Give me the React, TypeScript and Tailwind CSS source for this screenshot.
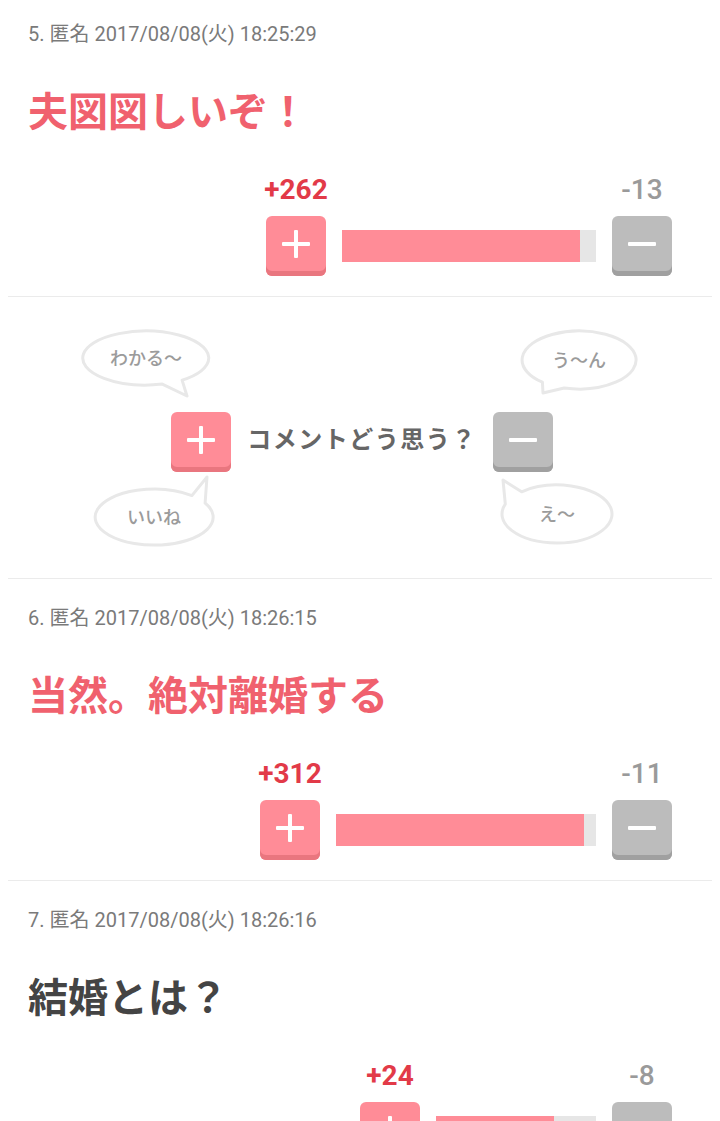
const entries = [
  { no: 5, date: "2017/08/08(火) 18:25:29", title: "夫図図しいぞ！", pink: true, plus: 262, minus: 13, barW: 254, fillW: 238, first: true },
  { no: 6, date: "2017/08/08(火) 18:26:15", title: "当然。絶対離婚する", pink: true, plus: 312, minus: 11, barW: 260, fillW: 248, first: false },
  { no: 7, date: "2017/08/08(火) 18:26:16", title: "結婚とは？", pink: false, plus: 24, minus: 8, barW: 160, fillW: 118, first: false },
];

const PlusButton = () => (
  <div className="w-[60px] h-[60px] rounded-[6px] bg-[#ff8c97] shadow-[inset_0_-5px_0_#e9767f] flex items-center justify-center pb-[5px]">
    <svg width="28" height="28" viewBox="0 0 28 28">
      <rect x="0" y="12" width="28" height="4" rx="1" fill="#fff" />
      <rect x="12" y="0" width="4" height="28" rx="1" fill="#fff" />
    </svg>
  </div>
);

const MinusButton = () => (
  <div className="w-[60px] h-[60px] rounded-[6px] bg-[#bcbcbc] shadow-[inset_0_-5px_0_#a0a0a0] flex items-center justify-center pb-[5px]">
    <svg width="28" height="28" viewBox="0 0 28 28">
      <rect x="0" y="12" width="28" height="4" rx="1" fill="#fff" />
    </svg>
  </div>
);

type BubbleProps = {
  left: number;
  top: number;
  w: number;
  h: number;
  cx: number;
  cy: number;
  rx: number;
  ry: number;
  a1: number;
  a2: number;
  tip: [number, number];
  text: string;
};

const Bubble = ({ left, top, w, h, cx, cy, rx, ry, a1, a2, tip, text }: BubbleProps) => {
  // ellipse outline with a little tail, drawn as one path
  const p = (a: number) => {
    const r = (a * Math.PI) / 180;
    return `${(cx + rx * Math.cos(r)).toFixed(1)} ${(cy + ry * Math.sin(r)).toFixed(1)}`;
  };
  const d = `M ${p(a2)} A ${rx} ${ry} 0 1 1 ${p(a1)} L ${tip[0]} ${tip[1]} Z`;
  return (
    <svg
      className="absolute"
      style={{ left, top }}
      width={w}
      height={h}
      viewBox={`0 0 ${w} ${h}`}
    >
      <path d={d} fill="#fff" stroke="#e8e8e8" strokeWidth="3" strokeLinejoin="round" />
      <text
        x={cx}
        y={cy}
        textAnchor="middle"
        dominantBaseline="central"
        className="fill-[#9b9b9b] text-[18px] font-medium"
      >
        {text}
      </text>
    </svg>
  );
};

const Divider = () => <div className="mx-2 h-px bg-[#ebebeb]" />;

const Entry = ({ e }: { e: (typeof entries)[number] }) => (
  <div className={`px-[28px] pb-[20px] ${e.first ? "pt-[22px]" : "pt-[27px]"}`}>
    <p className="text-[20px] leading-[24px] text-[#7a7a7a]">
      {e.no}. 匿名 {e.date}
    </p>
    <h2
      className={`mt-[39px] text-[40px] leading-[48px] font-bold font-['Noto_Sans_CJK_JP',sans-serif] ${
        e.pink ? "text-[#f0616e]" : "text-[#444]"
      }`}
    >
      {e.title}
    </h2>
    <div className="mt-[41px] flex justify-end items-end gap-4 pr-[20px]">
      <div className="w-[60px] flex flex-col items-center gap-[10px]">
        <span className="whitespace-nowrap text-[28px] leading-[32px] font-bold text-[#e23a48]">+{e.plus}</span>
        <PlusButton />
      </div>
      <div className="h-[60px] flex items-center">
        <div className="h-[32px] bg-[#e6e6e6]" style={{ width: e.barW }}>
          <div className="h-full bg-[#ff8c97]" style={{ width: e.fillW }} />
        </div>
      </div>
      <div className="w-[60px] flex flex-col items-center gap-[10px]">
        <span className="whitespace-nowrap text-[28px] leading-[32px] font-medium text-[#9a9a9a]">-{e.minus}</span>
        <MinusButton />
      </div>
    </div>
  </div>
);

const VotePanel = () => (
  <div className="relative h-[281px] pt-[115px]">
    <Bubble left={80} top={31} w={134} h={72} cx={66} cy={30} rx={63} ry={27} a1={55} a2={75} tip={[107, 68]} text="わかる〜" />
    <Bubble left={518} top={29} w={122} h={74} cx={61} cy={34} rx={57} ry={29} a1={105} a2={130} tip={[25, 67]} text="う〜ん" />
    <Bubble left={92} top={177} w={124} h={74} cx={62} cy={43} rx={59} ry={28} a1={-50} a2={-30} tip={[115, 3]} text="いいね" />
    <Bubble left={499} top={180} w={116} h={70} cx={58} cy={37} rx={55} ry={29} a1={-160} a2={-130} tip={[4, 3]} text="え〜" />
    <div className="flex items-center justify-center gap-4 pl-[4px]">
      <PlusButton />
      <span className="text-[24px] leading-[32px] font-bold tracking-[1.5px] text-[#666] pb-[4px]">
        コメントどう思う？
      </span>
      <MinusButton />
    </div>
  </div>
);

export default function App() {
  return (
    <div className="w-[720px] min-h-screen bg-white font-['Roboto','Noto_Sans_CJK_JP',sans-serif]">
      <Entry e={entries[0]} />
      <Divider />
      <VotePanel />
      <Divider />
      <Entry e={entries[1]} />
      <Divider />
      <Entry e={entries[2]} />
    </div>
  );
}
